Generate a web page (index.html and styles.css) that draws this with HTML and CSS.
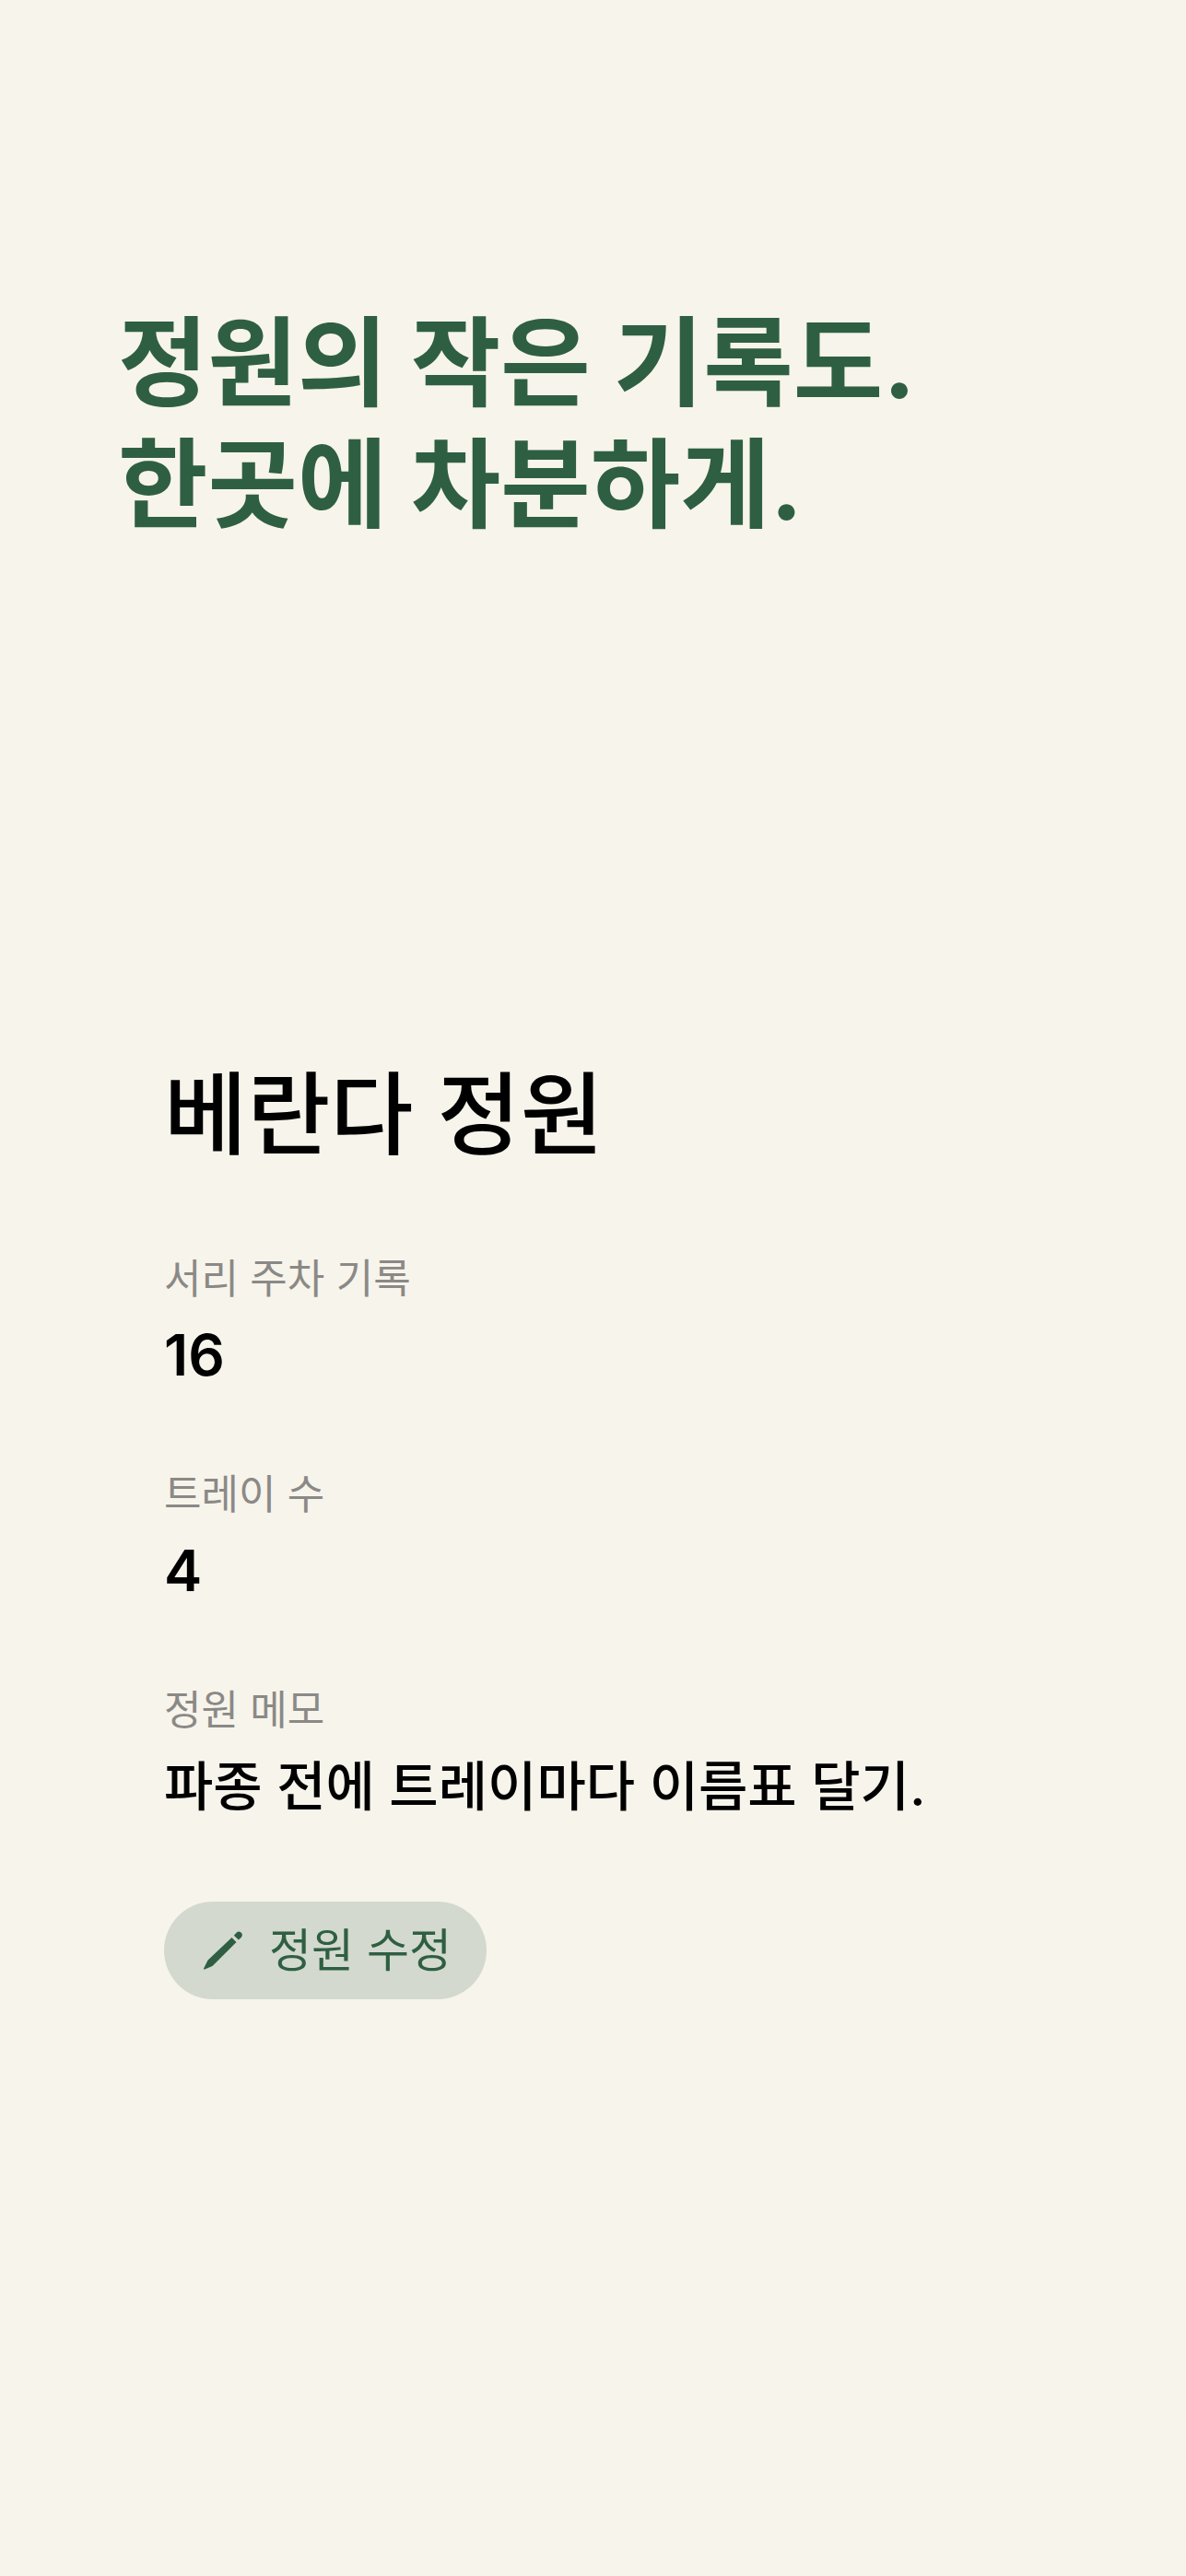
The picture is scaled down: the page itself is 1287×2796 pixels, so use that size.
FILE: index.html
```html
<!DOCTYPE html>
<html lang="ko">
<head>
<meta charset="UTF-8" />
<meta name="viewport" content="width=device-width, initial-scale=1" />
<title>베란다 정원</title>
<link rel="stylesheet" href="styles.css">
</head>
<body>
  <main class="page">
    <h1 class="headline">정원의 작은 기록도.<br>한곳에 차분하게.</h1>

    <section class="garden">
      <h2 class="garden-name">베란다 정원</h2>

      <!-- Garden details -->
      <dl class="details">
        <div class="detail">
          <dt>서리 주차 기록</dt>
          <dd>16</dd>
        </div>
        <div class="detail">
          <dt>트레이 수</dt>
          <dd>4</dd>
        </div>
        <div class="detail">
          <dt>정원 메모</dt>
          <dd class="memo">파종 전에 트레이마다 이름표 달기.</dd>
        </div>
      </dl>

      <button class="edit" type="button">
        <svg class="edit-icon" viewBox="0 0 44 44" aria-hidden="true">
          <path d="M1.500 42.500q-.8 0-.4-.9l3.500-7.200q.6-1.300 1.600-2.300L31.500 8l5 5L11.500 38q-1 1-2.300 1.600l-7 2.800z" />
          <path d="M33.800 5.800l2.800-3q2-1.900 4.200-.9 2 1 2.100 3.200 0 1.500-1.200 2.800l-2.800 2.700z" />
        </svg>
        정원 수정
      </button>
    </section>
  </main>
</body>
</html>
```
FILE: styles.css
```css
body {
  margin: 0;
  background-color: #f7f4eb;
  color: #000;
  font-family: Inter, "Noto Sans CJK KR", sans-serif;
}

.page {
  padding: 328px 128px 128px;
}

.headline {
  margin: 0;
  color: #2f5f42;
  font-size: 106px;
  font-weight: 700;
  line-height: 132px;
}

.garden {
  margin-top: 546px;
  padding: 0 50px;
}

.garden-name {
  margin: 0;
  font-size: 98px;
  font-weight: 500;
  line-height: 144px;
}

.details {
  margin: 70px 0 0;
}

.detail {
  margin-bottom: 68px;
}

.detail dt {
  color: #8b8986;
  font-size: 44px;
  line-height: 72px;
}

.detail dd {
  margin: 0;
  font-size: 62px;
  font-weight: 600;
  line-height: 94px;
}

.detail .memo {
  font-size: 58px;
  font-weight: 500;
}

/* Pill button under the details */
.edit {
  display: flex;
  align-items: center;
  gap: 28px;
  margin-top: 78px;
  padding: 17px 38px 17px 42px;
  border: none;
  border-radius: 54px;
  background-color: #d3d9ce;
  color: #2f5f42;
  font-family: inherit;
  font-size: 50px;
  line-height: 72px;
  cursor: pointer;
}

.edit-icon {
  width: 44px;
  height: 44px;
  fill: currentColor;
}
```
